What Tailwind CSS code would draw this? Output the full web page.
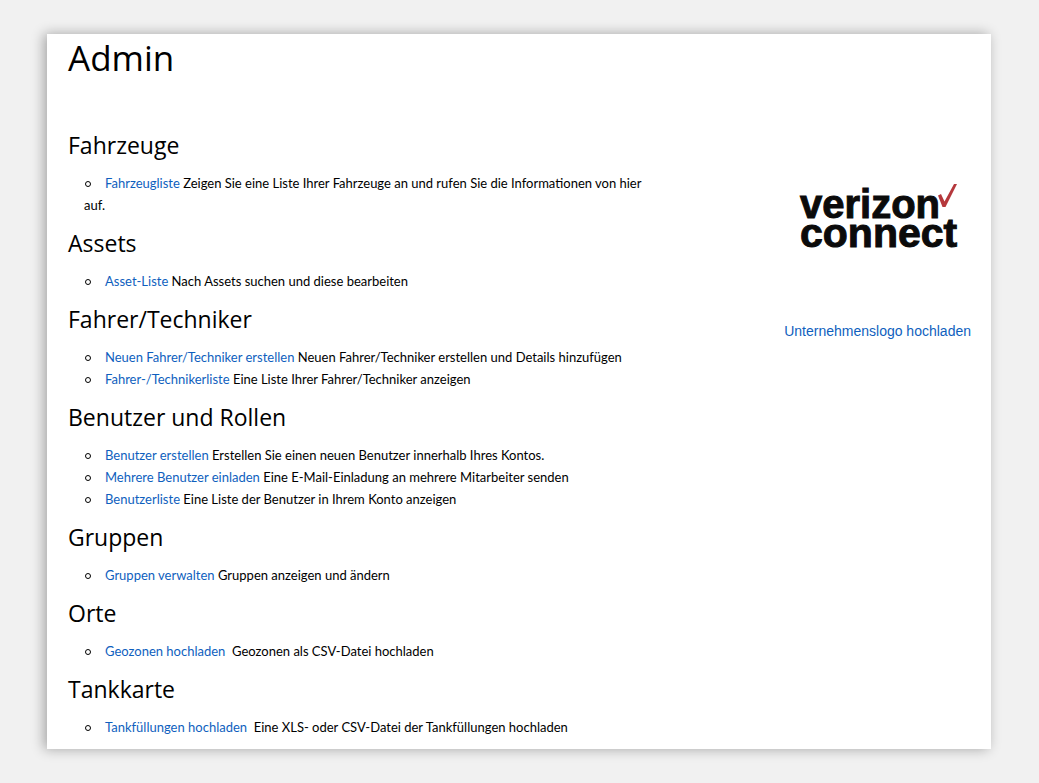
<!DOCTYPE html>
<html lang="de">
<head>
<meta charset="utf-8">
<title>Admin</title>
<script src="https://cdn.jsdelivr.net/npm/@tailwindcss/browser@4"></script>
</head>
<body class="min-h-screen bg-[#f1f1f1] pt-[34px] pr-12 pb-[34px] pl-[47px] font-[Lato,sans-serif] text-[13px] leading-[22px] text-black">
<main class="bg-white pr-5 pb-[11px] pl-[21px] shadow-[-3px_0_12px_rgba(0,0,0,0.32)]">
  <h1 class="py-px font-['Open_Sans',sans-serif] text-[35px] leading-[46px]">Admin</h1>
  <div class="flex items-start justify-between pt-9">
    <div class="w-[590px]">
      <section>
        <h2 class="pt-[11px] pb-[7px] font-['Open_Sans',sans-serif] text-[23px] leading-[32px]">Fahrzeuge</h2>
        <ul class="pl-4 pt-1">
          <li><span class="ml-px mr-[14px] mb-0.5 inline-block size-[6px] rounded-full border border-black align-middle"></span><a href="#" class="text-[#0f5fbe]">Fahrzeugliste</a> Zeigen Sie eine Liste Ihrer Fahrzeuge an und rufen Sie die Informationen von hier auf.</li>
        </ul>
      </section>
      <section>
        <h2 class="pt-[11px] pb-[7px] font-['Open_Sans',sans-serif] text-[23px] leading-[32px]">Assets</h2>
        <ul class="pl-4 pt-1">
          <li><span class="ml-px mr-[14px] mb-0.5 inline-block size-[6px] rounded-full border border-black align-middle"></span><a href="#" class="text-[#0f5fbe]">Asset-Liste</a> Nach Assets suchen und diese bearbeiten</li>
        </ul>
      </section>
      <section>
        <h2 class="pt-[11px] pb-[7px] font-['Open_Sans',sans-serif] text-[23px] leading-[32px]">Fahrer/Techniker</h2>
        <ul class="pl-4 pt-1">
          <li><span class="ml-px mr-[14px] mb-0.5 inline-block size-[6px] rounded-full border border-black align-middle"></span><a href="#" class="text-[#0f5fbe]">Neuen Fahrer/Techniker erstellen</a> Neuen Fahrer/Techniker erstellen und Details hinzufügen</li>
          <li><span class="ml-px mr-[14px] mb-0.5 inline-block size-[6px] rounded-full border border-black align-middle"></span><a href="#" class="text-[#0f5fbe]">Fahrer-/Technikerliste</a> Eine Liste Ihrer Fahrer/Techniker anzeigen</li>
        </ul>
      </section>
      <section>
        <h2 class="pt-[11px] pb-[7px] font-['Open_Sans',sans-serif] text-[23px] leading-[32px]">Benutzer und Rollen</h2>
        <ul class="pl-4 pt-1">
          <li><span class="ml-px mr-[14px] mb-0.5 inline-block size-[6px] rounded-full border border-black align-middle"></span><a href="#" class="text-[#0f5fbe]">Benutzer erstellen</a> Erstellen Sie einen neuen Benutzer innerhalb Ihres Kontos.</li>
          <li><span class="ml-px mr-[14px] mb-0.5 inline-block size-[6px] rounded-full border border-black align-middle"></span><a href="#" class="text-[#0f5fbe]">Mehrere Benutzer einladen</a> Eine E-Mail-Einladung an mehrere Mitarbeiter senden</li>
          <li><span class="ml-px mr-[14px] mb-0.5 inline-block size-[6px] rounded-full border border-black align-middle"></span><a href="#" class="text-[#0f5fbe]">Benutzerliste</a> Eine Liste der Benutzer in Ihrem Konto anzeigen</li>
        </ul>
      </section>
      <section>
        <h2 class="pt-[11px] pb-[7px] font-['Open_Sans',sans-serif] text-[23px] leading-[32px]">Gruppen</h2>
        <ul class="pl-4 pt-1">
          <li><span class="ml-px mr-[14px] mb-0.5 inline-block size-[6px] rounded-full border border-black align-middle"></span><a href="#" class="text-[#0f5fbe]">Gruppen verwalten</a> Gruppen anzeigen und ändern</li>
        </ul>
      </section>
      <section>
        <h2 class="pt-[11px] pb-[7px] font-['Open_Sans',sans-serif] text-[23px] leading-[32px]">Orte</h2>
        <ul class="pl-4 pt-1">
          <li><span class="ml-px mr-[14px] mb-0.5 inline-block size-[6px] rounded-full border border-black align-middle"></span><a href="#" class="text-[#0f5fbe]">Geozonen hochladen</a>&nbsp; Geozonen als CSV-Datei hochladen</li>
        </ul>
      </section>
      <section>
        <h2 class="pt-[11px] pb-[7px] font-['Open_Sans',sans-serif] text-[23px] leading-[32px]">Tankkarte</h2>
        <ul class="pl-4 pt-1">
          <li><span class="ml-px mr-[14px] mb-0.5 inline-block size-[6px] rounded-full border border-black align-middle"></span><a href="#" class="text-[#0f5fbe]">Tankfüllungen hochladen</a>&nbsp; Eine XLS- oder CSV-Datei der Tankfüllungen hochladen</li>
        </ul>
      </section>
    </div>
    <aside class="flex shrink-0 flex-col items-end pt-[59px] font-['Liberation_Sans',Arial,sans-serif]">
      <svg class="mr-2" width="170" height="80" viewBox="0 0 170 80" role="img" aria-label="verizon connect">
        <g font-family="'Liberation Sans', Arial, sans-serif" font-weight="700" fill="#0b0b0b" stroke="#0b0b0b" stroke-width="1">
          <text x="7" y="41" font-size="40">verizon</text>
          <text x="7" y="70" font-size="41">connect</text>
        </g>
        <path d="M145 18.500 L148 17 L151.500 24.500 L161 7 L164 7 L152.500 30 L149.500 30 Z" fill="#b5383c"/>
      </svg>
      <a href="#" class="pt-[63px] text-sm leading-[22px] text-[#0f5fbe]">Unternehmenslogo hochladen</a>
    </aside>
  </div>
</main>
</body>
</html>
